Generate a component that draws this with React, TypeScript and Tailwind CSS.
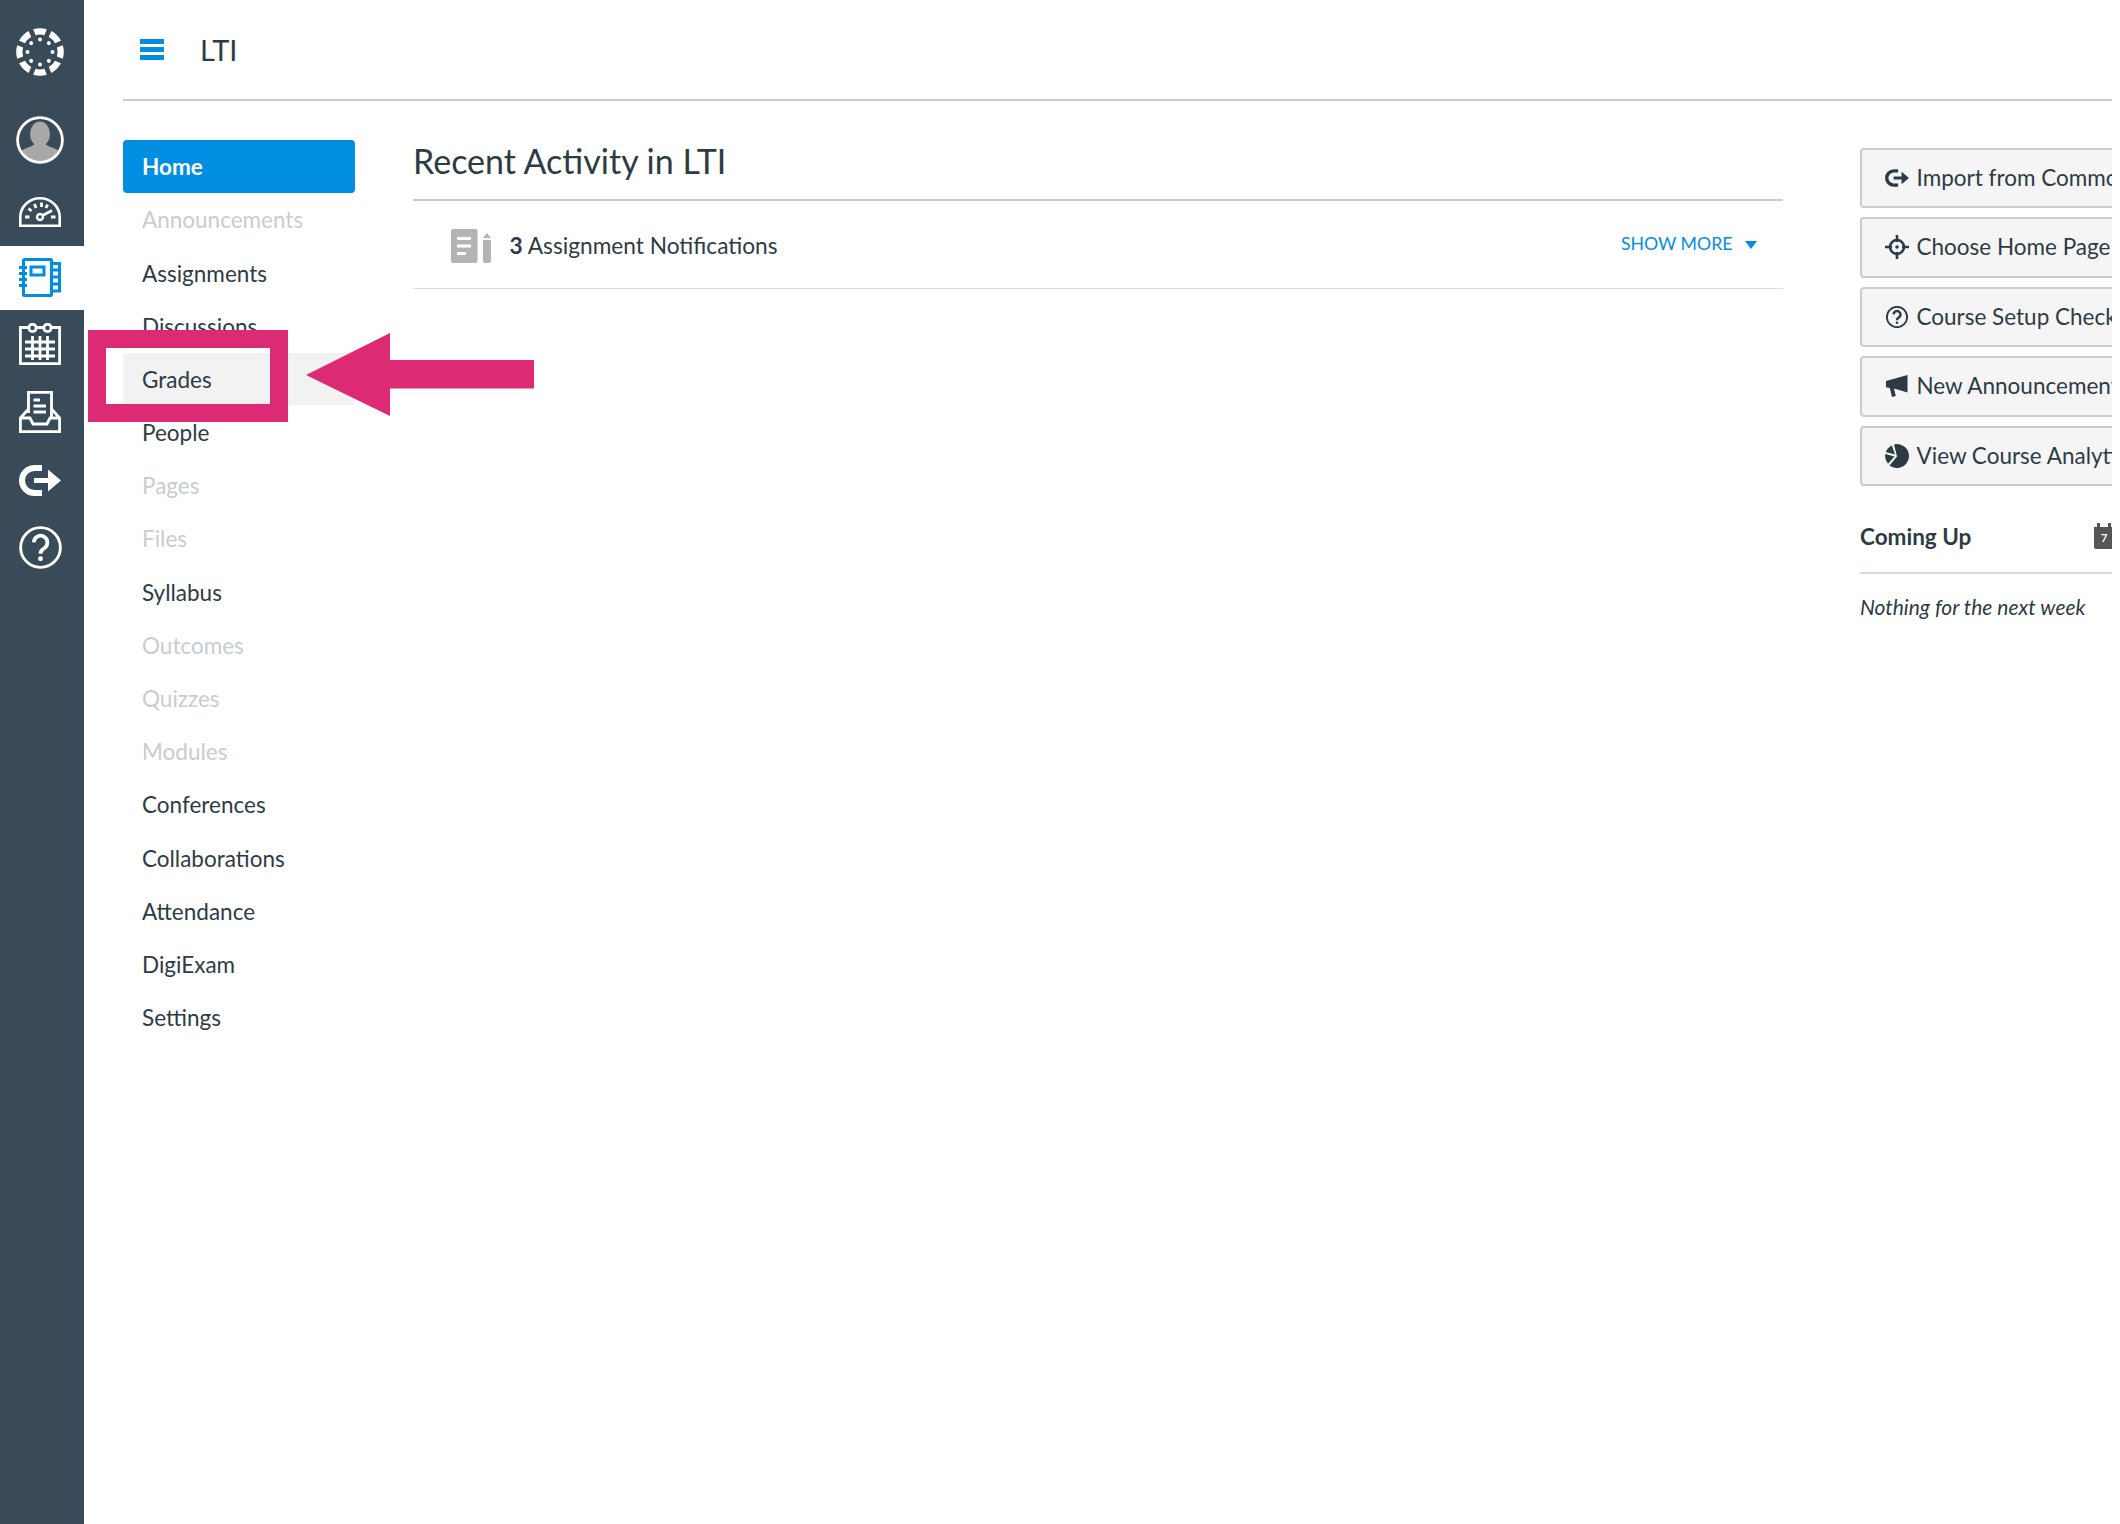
const navItems = [
  { label: "Home", active: true },
  { label: "Announcements", off: true },
  { label: "Assignments" },
  { label: "Discussions" },
  { label: "Grades", hover: true },
  { label: "People" },
  { label: "Pages", off: true },
  { label: "Files", off: true },
  { label: "Syllabus" },
  { label: "Outcomes", off: true },
  { label: "Quizzes", off: true },
  { label: "Modules", off: true },
  { label: "Conferences" },
  { label: "Collaborations" },
  { label: "Attendance" },
  { label: "DigiExam" },
  { label: "Settings" },
];

const CanvasLogo = () => (
  <svg viewBox="-24 -24 48 48" className="w-[48px] h-[48px]" fill="#fff">
    {[0, 45, 90, 135, 180, 225, 270, 315].map((a) => (
      <g key={a} transform={`rotate(${a})`}>
        <path d="M-6.8 -22.8 A23.8 23.8 0 0 1 6.8 -22.8 L4.4 -16.8 Q0 -18.2 -4.4 -16.8 Z" />
        <circle cx="0" cy="-12.5" r="2" />
      </g>
    ))}
  </svg>
);

const Avatar = () => (
  <svg viewBox="0 0 48 48" className="w-[48px] h-[48px]">
    <clipPath id="avatarClip">
      <circle cx="24" cy="24" r="22" />
    </clipPath>
    <g clipPath="url(#avatarClip)" fill="#a8a8a8">
      <ellipse cx="24" cy="18" rx="10" ry="12.5" />
      <path d="M2 48 V38 C6 32 14 32 19 28 H29 C34 32 42 32 46 38 V48 Z" />
    </g>
    <circle cx="24" cy="24" r="22.4" fill="none" stroke="#fff" strokeWidth="2.8" />
  </svg>
);

const DashboardIcon = () => (
  <svg viewBox="0 0 42 30" className="w-[42px] h-[30px]" fill="none" stroke="#fff" strokeWidth="2.6">
    <path d="M1.3 28.7 V20 A19.7 18.7 0 0 1 40.7 20 V28.7 Z" />
    <circle cx="21" cy="20" r="3" strokeWidth="2.4" />
    <path d="M23.5 18.6 L33 13.5" strokeWidth="2.8" />
    <path d="M6 20 H10.5 M32 20 H36.5 M9.5 11.5 L12.5 14 M15.5 7 L17 11 M22.5 5.5 V10 M28.5 7.5 L27 11" strokeWidth="2.8" />
  </svg>
);

const CoursesIcon = () => (
  <svg viewBox="0 0 42 39" className="w-[42px] h-[39px]" fill="none" stroke="#008ee2" strokeWidth="3">
    <rect x="4.5" y="1.5" width="28" height="36" rx="1" />
    <rect x="12" y="9" width="13" height="8" />
    <path d="M0 9.5 H8 M0 15.5 H8 M0 21.5 H8 M0 27.5 H8" />
    <path d="M32.5 5.5 H40.5 V33 H32.5" />
    <path d="M32.5 12 H40.5 M32.5 19 H40.5 M32.5 26 H40.5" />
  </svg>
);

const CalendarIcon = () => (
  <svg viewBox="0 0 42 42" className="w-[42px] h-[42px]" fill="none" stroke="#fff" strokeWidth="2.8">
    <path d="M9 4.5 H1.4 V40.6 H40.6 V4.5 H33 M18 4.5 H24" />
    <rect x="10" y="1.4" width="7" height="7" rx="3" />
    <rect x="25" y="1.4" width="7" height="7" rx="3" />
    <path d="M6 19 H36 M6 26 H36 M6 33 H36 M13.5 13 V37 M21 13 V37 M28.5 13 V37" />
  </svg>
);

const InboxIcon = () => (
  <svg viewBox="0 0 42 42" className="w-[42px] h-[42px]" fill="none" stroke="#fff" strokeWidth="2.8">
    <path d="M9.5 22 V1.4 H32.5 V27" />
    <path d="M14.5 9 H21 M14.5 15 H27 M14.5 21 H27" />
    <path d="M9.5 18 L1.4 27 V40.6 H40.6 V27 L32.5 18" />
    <path d="M1.4 27 H11 L14 33 H28 L31 27 H40.6" />
  </svg>
);

const CommonsIcon = ({ className = "", color = "#fff" }: { className?: string; color?: string }) => (
  <svg viewBox="0 0 42 31" className={className}>
    <path d="M23 3 H15.5 A12.5 12.5 0 0 0 15.5 28 H23" fill="none" stroke={color} strokeWidth="6" />
    <path d="M15 13 H29 V4.5 L42 15.5 L29 26.5 V18 H15 Z" fill={color} />
  </svg>
);

const HelpIcon = ({ className = "", color = "#fff", w = 2.8 }: { className?: string; color?: string; w?: number }) => (
  <svg viewBox="0 0 42 42" className={className} fill="none" stroke={color} strokeWidth={w}>
    <circle cx="21" cy="21" r="19.4" />
    <path d="M14.5 16 A6.6 6.6 0 1 1 24.5 21.8 C22 23.2 21 24.2 21 27" strokeWidth={w * 1.3} />
    <circle cx="21" cy="32" r="2.4" fill={color} stroke="none" />
  </svg>
);

const CrosshairIcon = () => (
  <svg viewBox="0 0 24 24" className="w-[24px] h-[24px]" fill="none" stroke="#2d3b45" strokeWidth="2.6">
    <circle cx="12" cy="12" r="7" />
    <circle cx="12" cy="12" r="1.8" fill="#2d3b45" stroke="none" />
    <path d="M12 0 V7 M12 17 V24 M0 12 H7 M17 12 H24" />
  </svg>
);

const MegaphoneIcon = () => (
  <svg viewBox="0 0 22 22" className="w-[22px] h-[22px]" fill="#2d3b45">
    <path d="M21.5 0 V17.5 L8 13.5 L9.8 21 L6 22 L3.8 13 L0 12.2 V6 Z" />
  </svg>
);

const PieIcon = () => (
  <svg viewBox="0 0 24 24" className="w-[24px] h-[24px]" fill="#2d3b45">
    <path d="M9 .4 A12 12 0 1 1 4.5 21.4 L12 12.5 Z" />
    <path d="M6.8 1.4 L10 10.5 L.8 8 A12 12 0 0 1 6.8 1.4 Z" />
    <path d="M.3 10 L9.5 12.6 L3 19.8 A12 12 0 0 1 .3 10 Z" />
  </svg>
);

const actions = [
  { label: "Import from Commons", icon: <CommonsIcon className="w-[24px] h-[18px]" color="#2d3b45" /> },
  { label: "Choose Home Page", icon: <CrosshairIcon /> },
  { label: "Course Setup Checklist", icon: <HelpIcon className="w-[22px] h-[22px]" color="#2d3b45" w={3.6} /> },
  { label: "New Announcement", icon: <MegaphoneIcon /> },
  { label: "View Course Analytics", icon: <PieIcon /> },
];

export default function App() {
  return (
    <div className="relative flex w-[2120px] h-[1524px] bg-white font-['Lato',sans-serif] text-[#2d3b45] overflow-hidden">
      {/* Global nav */}
      <aside className="w-[84px] shrink-0 bg-[#394b58] flex flex-col items-center">
        <div className="h-[100px] flex items-center justify-center pt-[4px] pr-[4px]">
          <CanvasLogo />
        </div>
        <div className="h-[80px] flex items-center justify-center pr-[4px]">
          <Avatar />
        </div>
        <div className="h-[66px] flex items-center justify-center pb-[3px] pr-[4px]">
          <DashboardIcon />
        </div>
        <div className="w-full h-[64px] bg-white flex items-center justify-center pb-[1px] pr-[4px]">
          <CoursesIcon />
        </div>
        <div className="h-[68px] flex items-center justify-center pr-[4px]">
          <CalendarIcon />
        </div>
        <div className="h-[68px] flex items-center justify-center pr-[4px]">
          <InboxIcon />
        </div>
        <div className="h-[66px] flex items-center justify-center pt-[2px] pr-[4px]">
          <CommonsIcon className="w-[42px] h-[31px]" />
        </div>
        <div className="h-[68px] flex items-center justify-center pt-[2px] pr-[4px]">
          <HelpIcon className="w-[43px] h-[43px]" />
        </div>
      </aside>

      {/* Page */}
      <div className="w-[2028px] shrink-0 pl-[38.5px] overflow-hidden">
        <header className="h-[101px] border-b-2 border-[#c7cdd1] flex items-center">
          <div className="w-[24px] h-[21px] ml-[17px] flex flex-col justify-between">
            <div className="h-[5px] bg-[#008ee2]" />
            <div className="h-[5px] bg-[#008ee2]" />
            <div className="h-[5px] bg-[#008ee2]" />
          </div>
          <span className="ml-[36.5px] text-[29px] leading-none">LTI</span>
        </header>

        <div className="flex">
          {/* Course nav */}
          <nav className="w-[232.5px] shrink-0 mt-[39px] flex flex-col gap-[0.7px]">
            {navItems.map((item) => (
              <a
                key={item.label}
                className={`h-[52.5px] flex items-center pl-[19.5px] pt-[1.5px] rounded-[4px] text-[22.5px] ${
                  item.active
                    ? "bg-[#008ee2] text-white font-bold"
                    : item.hover
                      ? "bg-[#f2f2f2]"
                      : item.off
                        ? "text-[#c7cdd1]"
                        : ""
                }`}
              >
                {item.label}
              </a>
            ))}
          </nav>

          {/* Recent activity */}
          <main className="w-[1370px] shrink-0 ml-[57.5px]">
            <h2 className="h-[100px] border-b-2 border-[#c7cdd1] pt-[38px] pl-[0.5px] text-[34px] leading-[44px]">
              Recent Activity in LTI
            </h2>
            <div className="h-[88px] border-b border-[#ddd] flex items-center pl-[38px] pr-[26px]">
              <svg viewBox="0 0 40 34" className="w-[40px] h-[34px] mt-[2px]" fill="#b4b4b4">
                <path d="M2 0 H24.5 A2 2 0 0 1 26.5 2 V32 A2 2 0 0 1 24.5 34 H2 A2 2 0 0 1 0 32 V2 A2 2 0 0 1 2 0 Z M6 8 V11 H20 V8 Z M6 15.5 V18.5 H20 V15.5 Z M6 23 V26 H15 V23 Z" fillRule="evenodd" />
                <path d="M36 4 L40 9 H32 Z M32 11 H40 V32 A4 2 0 0 1 32 32 Z" />
              </svg>
              <span className="ml-[19px] mt-[3px] text-[22.7px]">
                <b className="font-bold">3</b> Assignment Notifications
              </span>
              <span className="ml-auto text-[17.7px] text-[#008ee2]">SHOW MORE</span>
              <svg viewBox="0 0 12 8" className="w-[12px] h-[8px] ml-[12px]" fill="#008ee2">
                <path d="M0 0 H12 L6 8 Z" />
              </svg>
            </div>
          </main>

          {/* Right side */}
          <section className="w-[400px] shrink-0 ml-[77.5px] pt-[46.5px]">
            <div className="flex flex-col gap-[9px]">
              {actions.map((a) => (
                <div
                  key={a.label}
                  className="h-[60.5px] border-2 border-[#c7cdd1] rounded-[4px] bg-[#f5f5f5] flex items-center pl-[23px] whitespace-nowrap text-[22.5px]"
                >
                  <span className="w-[24px] flex items-center justify-center">{a.icon}</span>
                  <span className="ml-[7.5px]">{a.label}</span>
                </div>
              ))}
            </div>
            <div className="w-[252px] mt-[22px] h-[66px] border-b-2 border-[#d5dadd] flex items-start justify-between">
              <span className="font-bold text-[22.5px] mt-[12px]">Coming Up</span>
              <div className="relative mt-[15px] w-[18px] h-[26px]">
                <svg viewBox="0 0 18 26" className="w-[18px] h-[26px]">
                  <path d="M0 4 H3 V0 H6 V4 H14 V0 H17 V4 H18 V26 H2 A2 2 0 0 1 0 24 Z" fill="#555" />
                </svg>
                <span className="absolute left-[7px] top-[8px] text-[11px] leading-[14px] font-bold text-white">7</span>
              </div>
            </div>
            <p className="mt-[17px] italic text-[21px]">Nothing for the next week</p>
          </section>
        </div>
      </div>

      {/* Screenshot annotation */}
      <div className="absolute left-[88px] top-[330px] w-[200px] h-[92px] border-[18px] border-[#dc2b74]" />
      <svg viewBox="0 0 228 83" className="absolute left-[306px] top-[333px] w-[228px] h-[83px]" fill="#dc2b74">
        <path d="M0 42 L84 0 V27 H228 V55.5 H84 V83 Z" />
      </svg>
    </div>
  );
}
